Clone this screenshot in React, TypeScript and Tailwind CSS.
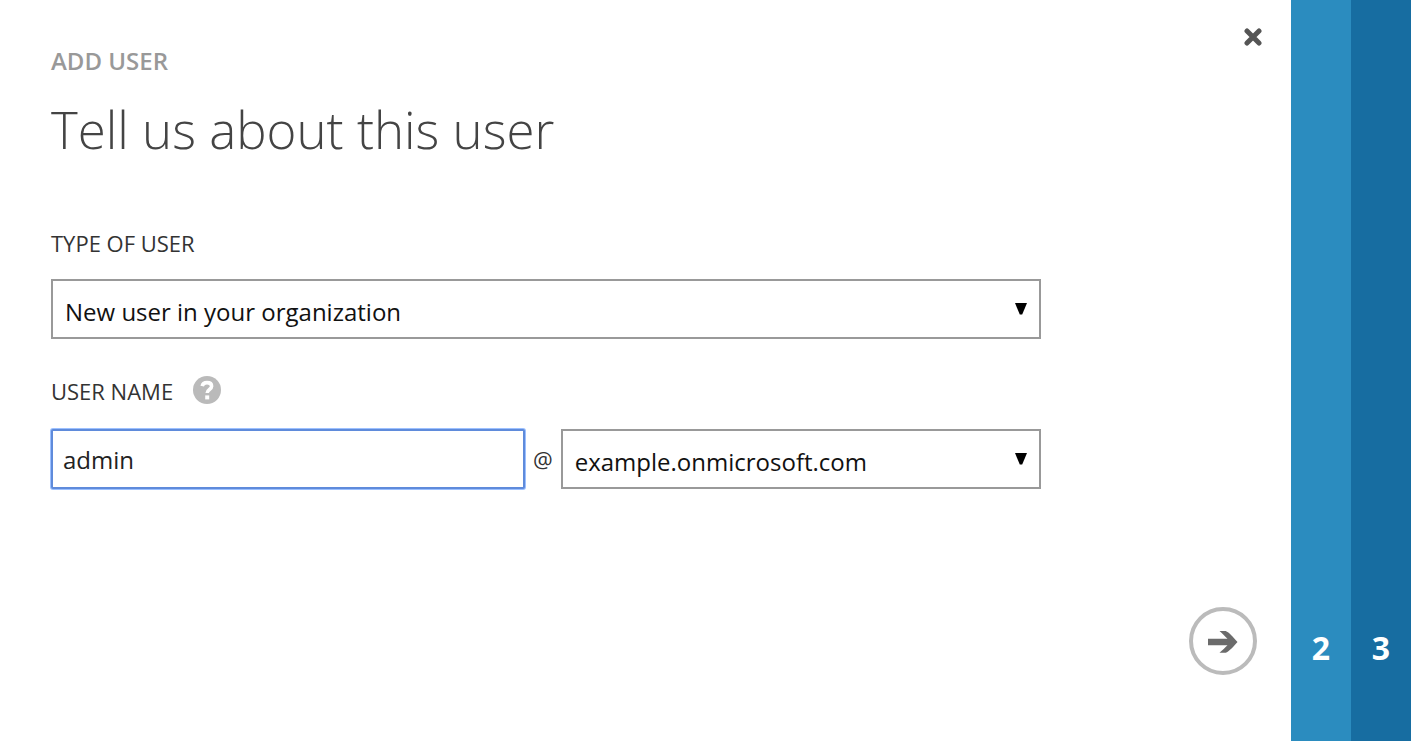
import { useState } from "react";
import type { ReactNode } from "react";

const steps = [
  { label: "2", className: "bg-[#2b8cbf]" },
  { label: "3", className: "bg-[#176da1]" },
];

type SelectBoxProps = {
  id: string;
  label?: string;
  children: ReactNode;
};

const SelectBox = ({ id, label, children }: SelectBoxProps) => (
  <div className="relative">
    <select
      id={id}
      aria-label={label}
      className="block h-[60px] w-full appearance-none border-2 border-[#999999] bg-white pt-1.5 pr-10 pl-3 text-2xl text-[#111111] outline-none"
    >
      {children}
    </select>
    <svg
      viewBox="0 0 12 12"
      className="pointer-events-none absolute top-6 right-3.5 size-3"
      aria-hidden="true"
    >
      <path d="M0 0h12L7.2 11.5H4.8z" fill="#000" />
    </svg>
  </div>
);

export default function App() {
  const [userName, setUserName] = useState("admin");

  return (
    <div className="flex min-h-screen bg-white font-['Open_Sans','Noto_Sans',sans-serif] text-[#333333]">
      <main className="flex flex-1 flex-col pl-[51px]">
        <header className="flex items-start justify-between pt-[27px] pr-7">
          <div className="pt-5">
            <p className="text-2xl leading-7 font-semibold text-[#999999]">ADD USER</p>
            <h1 className="mt-5 text-[51px] leading-[68px] font-light text-[#444444]">
              Tell us about this user
            </h1>
          </div>
          <button type="button" aria-label="Close" className="flex size-5 items-center justify-center">
            <svg viewBox="0 0 18 18" className="size-[18px]" fill="none" stroke="#555" strokeWidth="5" strokeLinecap="round">
              <path d="M3 3l12 12M15 3L3 15" />
            </svg>
          </button>
        </header>

        <form className="mt-[66px] w-full max-w-[990px]">
          <label htmlFor="user-type" className="block text-[22px] leading-7">
            TYPE OF USER
          </label>
          <div className="mt-[22px]">
            <SelectBox id="user-type">
              <option>New user in your organization</option>
            </SelectBox>
          </div>

          <div className="mt-9 flex items-center gap-5">
            <label htmlFor="user-name" className="pt-0.5 text-[22px] leading-7">
              USER NAME
            </label>
            <button type="button" aria-label="Help" className="size-7">
              <svg viewBox="0 0 28 28" className="size-7">
                <circle cx="14" cy="14" r="14" fill="#bababa" />
                <path
                  d="M9.2 10.2C9.7 7.6 11.4 6.6 14 6.6c2.9 0 4.6 1.4 4.6 3.6 0 3.4-4.4 3.1-4.4 6.8"
                  fill="none"
                  stroke="#fff"
                  strokeWidth="3.6"
                />
                <path d="M12.2 19.4h4v4h-4z" fill="#fff" />
              </svg>
            </button>
          </div>
          <div className="mt-6 flex items-center gap-2">
            <input
              id="user-name"
              type="text"
              value={userName}
              onChange={(e) => setUserName(e.target.value)}
              className="h-[60px] w-[474px] min-w-0 rounded-xs border-2 border-[#5f8bdb] bg-white px-2.5 text-2xl text-[#222222] ring-1 ring-[#9cc0ff] outline-none"
            />
            <span className="text-[22px]">@</span>
            <div className="min-w-0 flex-1">
              <SelectBox id="domain" label="Domain">
                <option>example.onmicrosoft.com</option>
              </SelectBox>
            </div>
          </div>
        </form>

        <div className="mt-auto flex justify-end pr-[34px] pb-[66px]">
          <button
            type="button"
            aria-label="Next"
            className="flex size-[68px] items-center justify-center rounded-full border-4 border-[#bbbbbb]"
          >
            <svg viewBox="0 0 30 24" className="h-6 w-[30px]" fill="#6b6b6b">
              <path d="M0 9.8h19.5C17 7.4 14.6 4.6 11.5 2h6.2c3.4 1.3 7.6 6.2 11.8 11-4.2 4.8-8.4 9.4-11.8 10.8h-6.2c3.1-2.6 5.5-5.4 8-7.6H0z" />
            </svg>
          </button>
        </div>
      </main>

      <nav aria-label="Steps" className="flex">
        {steps.map((step) => (
          <button
            key={step.label}
            type="button"
            className={`flex w-[60px] items-end justify-center pb-[73px] text-[32px] leading-10 font-bold text-white ${step.className}`}
          >
            {step.label}
          </button>
        ))}
      </nav>
    </div>
  );
}
